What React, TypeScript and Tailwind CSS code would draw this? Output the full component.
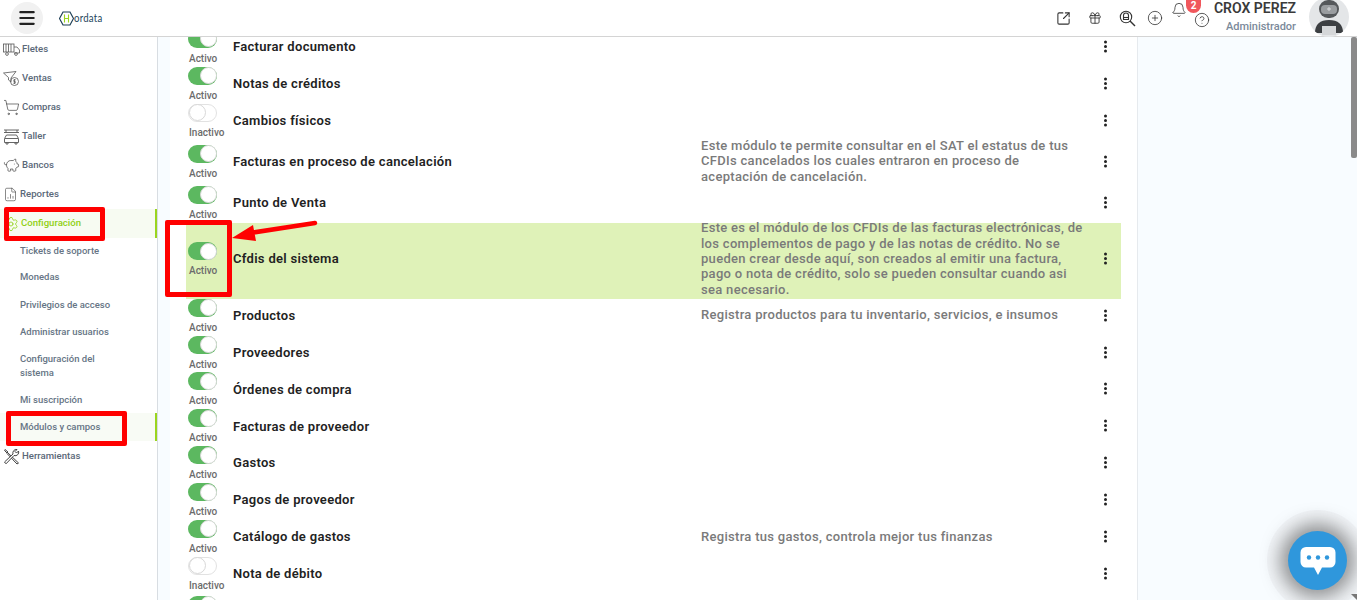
import { Menu, SquareArrowOutUpRight, Gift, CirclePlus, Bell, CircleHelp, ShoppingCart, PiggyBank, FileChartColumn, Settings } from 'lucide-react';

const FONT = "font-['Roboto',sans-serif]";

interface Row {
  title: string;
  active: boolean;
  desc?: string;
  hl?: boolean;
  h: string;
}

const ROWS: Row[] = [
  { title: 'Facturar documento', active: true, h: 'h-[36.9px]' },
  { title: 'Notas de créditos', active: true, h: 'h-[36.9px]' },
  { title: 'Cambios físicos', active: false, h: 'h-[36.9px]' },
  {
    title: 'Facturas en proceso de cancelación',
    active: true,
    h: 'h-[45px]',
    desc: 'Este módulo te permite consultar en el SAT el estatus de tus CFDIs cancelados los cuales entraron en proceso de aceptación de cancelación.',
  },
  { title: 'Punto de Venta', active: true, h: 'h-[37px]' },
  {
    title: 'Cfdis del sistema',
    active: true,
    hl: true,
    h: 'h-[76px]',
    desc: 'Este es el módulo de los CFDIs de las facturas electrónicas, de los complementos de pago y de las notas de crédito. No se pueden crear desde aquí, son creados al emitir una factura, pago o nota de crédito, solo se pueden consultar cuando asi sea necesario.',
  },
  { title: 'Productos', active: true, h: 'h-[36.9px]', desc: 'Registra productos para tu inventario, servicios, e insumos' },
  { title: 'Proveedores', active: true, h: 'h-[36.9px]' },
  { title: 'Órdenes de compra', active: true, h: 'h-[36.9px]' },
  { title: 'Facturas de proveedor', active: true, h: 'h-[36.9px]' },
  { title: 'Gastos', active: true, h: 'h-[36.9px]' },
  { title: 'Pagos de proveedor', active: true, h: 'h-[36.9px]' },
  { title: 'Catálogo de gastos', active: true, h: 'h-[36.9px]', desc: 'Registra tus gastos, controla mejor tus finanzas' },
  { title: 'Nota de débito', active: false, h: 'h-[36.9px]' },
];

function Switch({ on }: { on: boolean }) {
  return (
    <div className={`w-[29px] h-[18px] rounded-full flex items-center ${on ? 'bg-[#5cb860] justify-end' : 'bg-white border border-[#e2e2e2] justify-start'}`}>
      <div className="w-[17px] h-[17px] rounded-full bg-white border border-[#d8d8d8]" />
    </div>
  );
}

function Toggle({ on }: { on: boolean }) {
  return (
    <div className="flex flex-col items-start w-[33px] pl-[2px] pb-[1px]">
      <Switch on={on} />
      <div className="mt-[4px] pl-[1px] text-[10px] leading-[14px] font-medium text-[#6b6b6b] whitespace-nowrap">{on ? 'Activo' : 'Inactivo'}</div>
    </div>
  );
}

function Dots() {
  return (
    <svg width="15" height="15" viewBox="0 0 15 15" className="shrink-0 mb-[4px]">
      <circle cx="7.5" cy="3" r="1.5" fill="#222" />
      <circle cx="7.5" cy="7.5" r="1.5" fill="#222" />
      <circle cx="7.5" cy="12" r="1.5" fill="#222" />
    </svg>
  );
}

function TopItem({ icon, label, active }: { icon: React.ReactNode; label: string; active?: boolean }) {
  return (
    <div className={`h-[29px] flex items-center gap-[2px] pl-[3px] text-[9.6px] font-medium ${active ? 'bg-[#f7fbf2] text-[#8fd014] border-r-2 border-[#9ad51f]' : 'text-[#5a6878]'}`}>
      {icon}
      <span>{label}</span>
    </div>
  );
}

function SubItem({ label, h, active }: { label: string; h: string; active?: boolean }) {
  return (
    <div className={`${h} flex items-center pl-[20px] pr-[40px] text-[9.5px] leading-[14px] font-medium text-[#667585] ${active ? 'bg-[#f8fbf5] border-r-2 border-[#9ad51f]' : ''}`}>
      {label}
    </div>
  );
}

function FletesIcon() {
  return (
    <svg width="17" height="13" viewBox="0 0 17 13" fill="none" stroke="#555" strokeWidth="0.8">
      <rect x="0.5" y="1" width="10.5" height="8" />
      <path d="M3 1 V9 M5.5 1 V9 M8 1 V9" />
      <path d="M11 4 H14 L16.5 7 V10 H11" />
      <circle cx="4" cy="11" r="1.4" />
      <circle cx="13" cy="11" r="1.4" />
    </svg>
  );
}

function VentasIcon() {
  return (
    <svg width="17" height="17" viewBox="0 0 17 17" fill="none" stroke="#555" strokeWidth="0.8">
      <path d="M0.5 3 L13 1.5 L8 8 V12 L5.5 10 V7.5 Z" />
      <circle cx="11.5" cy="11.5" r="4" />
      <path d="M12.8 9.8 H10.8 V11.5 H12.3 V13.2 H10.2 M11.5 9 V14" strokeWidth="0.7" />
    </svg>
  );
}

function TallerIcon() {
  return (
    <svg width="17" height="17" viewBox="0 0 17 17" fill="none" stroke="#555" strokeWidth="0.9">
      <path d="M1 2 H16 M1 4.5 H16 M3 2 V4.5 M14 2 V4.5" />
      <path d="M3.5 7 H13.5 L15.5 10.5 V14.5 H1.5 V10.5 Z" />
      <path d="M2 10.5 H15" />
      <path d="M3 14.5 V16 H5 V14.5 M12 14.5 V16 H14 V14.5" />
    </svg>
  );
}

function ToolsIcon() {
  return (
    <svg width="17" height="17" viewBox="0 0 17 17" fill="none" stroke="#444" strokeWidth="1">
      <path d="M2 1.5 L5 4 L4 5 L1.5 2.5 Z M4.5 4.5 L15.5 15 L14 16 L3.8 5.3" />
      <path d="M15.5 3 L13.5 5 L12 3.5 L14 1.5 A3.5 3.5 0 0 0 10 6 L1.5 14 L3 15.8 L11 7.5 A3.5 3.5 0 0 0 15.5 3 Z" fill="#fff" />
    </svg>
  );
}

function SearchIcon() {
  return (
    <svg width="17" height="17" viewBox="0 0 17 17" fill="none" stroke="#333" strokeWidth="1.1" className="ml-[17px]">
      <circle cx="7" cy="7" r="5.7" />
      <path d="M11 11 L16 16" strokeWidth="1.4" />
      <path d="M4.5 9.5 V5.5 A2.5 2.5 0 0 1 9.5 5.5 V9.5 Z" />
      <path d="M4.5 7.5 H9.5" />
    </svg>
  );
}

function Logo() {
  return (
    <div className="flex items-center">
      <svg width="15" height="15" viewBox="0 0 15 15" fill="none">
        <path d="M4 1 H11 L14.5 7.5 L11 14 H4 L.5 7.5 Z" stroke="#1d3f55" strokeWidth="1.2" />
        <path d="M5.5 3.5 V11.5 M9.5 3.5 V11.5 M5.5 7.5 H9.5" stroke="#9ad51f" strokeWidth="1.1" />
      </svg>
      <span className="text-[12px] text-[#25465c] font-['Lato',sans-serif] tracking-[0.3px] scale-x-[0.8] origin-left">ordata</span>
    </div>
  );
}

function Avatar() {
  return (
    <div className="w-[40px] h-[40px] rounded-full bg-[#e4e6e8] overflow-hidden">
      <svg width="40" height="40" viewBox="0 0 40 40">
        <rect x="10" y="3" width="20" height="18" rx="9" fill="#55585b" />
        <rect x="12" y="8" width="16" height="9" rx="4" fill="#9a9da0" />
        <path d="M18 12 H22 M20 10 V14" stroke="#d8dadc" strokeWidth="1" />
        <path d="M6 36 C6 27 11 23 20 23 C29 23 34 27 34 36 Z" fill="#3c3f42" />
        <rect x="13" y="29" width="14" height="9" fill="#d5d7d9" />
      </svg>
    </div>
  );
}

export default function App() {
  return (
    <div className={`${FONT} relative w-[1357px] h-[600px] overflow-hidden bg-white flex flex-col`}>
      {/* Header */}
      <header className="h-[37px] shrink-0 border-b border-[#d4d4d4] flex items-center bg-white">
        <div className="ml-[11px] w-[32px] h-[32px] rounded-full bg-[#f1f1f1] flex items-center justify-center">
          <Menu size={20} strokeWidth={2.6} className="text-[#222]" />
        </div>
        <div className="ml-[16px]"><Logo /></div>
        <div className="ml-auto flex items-center text-[#333]">
          <SquareArrowOutUpRight size={15} strokeWidth={1.7} />
          <Gift size={14} strokeWidth={1.5} className="ml-[17px]" />
          <SearchIcon />
          <CirclePlus size={16} strokeWidth={1.2} className="ml-[11px]" />
          <div className="relative w-[43px] h-[32px] ml-[7px]">
            <Bell size={16} strokeWidth={1.2} className="absolute left-[1px] top-0" />
            <span className="absolute left-[16px] -top-[2px] w-[15px] h-[13px] rounded-b-full rounded-t-[3px] bg-[#f0575c] text-white text-[10px] leading-[12px] font-bold text-center">2</span>
            <CircleHelp size={16} strokeWidth={1.2} className="absolute left-[24px] top-[10px]" />
          </div>
          <div className="ml-[2px] w-[81px] flex flex-col items-end">
            <div className="text-[14px] leading-[16px] font-semibold text-[#3a3a3a] whitespace-nowrap -mt-[2px]">CROX PEREZ</div>
            <div className="text-[11px] leading-[14px] font-medium text-[#7b8a9a] mt-[4px]">Administrador</div>
          </div>
          <div className="ml-[13px] mr-[8px] -mt-[2px]"><Avatar /></div>
        </div>
      </header>

      <div className="flex flex-1 min-h-0">
        {/* Sidebar */}
        <aside className="w-[158px] shrink-0 border-r border-[#d8dde2] bg-white overflow-hidden">
          <nav className="-mt-[2px]">
            <TopItem icon={<FletesIcon />} label="Fletes" />
            <TopItem icon={<VentasIcon />} label="Ventas" />
            <TopItem icon={<ShoppingCart size={17} strokeWidth={1} className="text-[#444]" />} label="Compras" />
            <TopItem icon={<TallerIcon />} label="Taller" />
            <TopItem icon={<PiggyBank size={17} strokeWidth={1} className="text-[#444]" />} label="Bancos" />
            <TopItem icon={<FileChartColumn size={15} strokeWidth={1} className="text-[#444]" />} label="Reportes" />
            <TopItem icon={<Settings size={16} strokeWidth={1.2} className="text-[#8fd014]" />} label="Configuración" active />
            <SubItem label="Tickets de soporte" h="h-[25px]" />
            <SubItem label="Monedas" h="h-[28px]" />
            <SubItem label="Privilegios de acceso" h="h-[27px]" />
            <SubItem label="Administrar usuarios" h="h-[27px]" />
            <SubItem label="Configuración del sistema" h="h-[42px]" />
            <SubItem label="Mi suscripción" h="h-[26px]" />
            <SubItem label="Módulos y campos" h="h-[28px]" active />
            <div className="mt-[1px]"><TopItem icon={<ToolsIcon />} label="Herramientas" /></div>
          </nav>
        </aside>

        {/* Main */}
        <main className="flex-1 min-w-0 bg-[#f8fcff] flex pl-[12px]">
          <div className="w-[967px] h-full bg-white overflow-hidden pl-[16px] pr-[16px]">
            <div className="-mt-[7px]">
              {ROWS.map((r, i) => (
                <div key={i} className={`${r.h} flex items-center ${r.hl ? 'bg-[#dff2b8]' : ''}`}>
                  <div className="w-[47px] shrink-0 flex"><Toggle on={r.active} /></div>
                  <div className="w-[468px] shrink-0 text-[13px] font-semibold text-[#222] tracking-[0.3px] pb-[3px] whitespace-nowrap">{r.title}</div>
                  <div className="w-[397px] pr-[11px] shrink-0 text-[13px] leading-[15.4px] font-medium text-[#7a7a7a] tracking-[0.3px] pb-[4px]">{r.desc}</div>
                  <Dots />
                </div>
              ))}
              {/* next row, only its switch is still in view */}
              <div className="pl-[2px] pt-[2px]"><Switch on /></div>
            </div>
          </div>
          <div className="flex-1 border-l border-[#e6eaee] relative">
            <div className="absolute right-0 top-0 w-[6px] h-[121px] bg-[#8a8a8a] rounded-[2px]" />
          </div>
        </main>
      </div>

      {/* Annotations */}
      <div className="absolute left-[4px] top-[207px] w-[101px] h-[34px] border-[5px] border-[#f00] rounded-[2px]" />
      <div className="absolute left-[6px] top-[411px] w-[121px] h-[35px] border-[5px] border-[#f00] rounded-[2px]" />
      <div className="absolute left-[165px] top-[220px] w-[67px] h-[77px] border-[5px] border-[#f00] rounded-[2px]" />
      <svg className="absolute left-[230px] top-[218px]" width="92" height="28" viewBox="0 0 92 28">
        <path d="M85 5 L20 15" stroke="#f00" strokeWidth="4.5" strokeLinecap="round" />
        <path d="M2 20 L23 7 L26 23 Z" fill="#f00" />
      </svg>

      {/* Chat */}
      <div className="absolute left-[1288px] top-[531px] w-[59px] h-[59px] rounded-full bg-[#2f97dc] shadow-[0_0_18px_8px_rgba(50,50,50,0.5),0_0_0_21px_rgba(235,238,241,0.5)] flex items-center justify-center">
        <svg width="36" height="30" viewBox="0 0 36 30">
          <path d="M6 1 H30 A5.5 5.5 0 0 1 35.5 6.5 V16 A5.5 5.5 0 0 1 30 21.5 H22 L18 29 L14 21.5 H6 A5.5 5.5 0 0 1 .5 16 V6.5 A5.5 5.5 0 0 1 6 1 Z" fill="#fff" />
          <circle cx="9" cy="11.5" r="2.2" fill="#2f97dc" />
          <circle cx="18" cy="11.5" r="2.2" fill="#2f97dc" />
          <circle cx="27" cy="11.5" r="2.2" fill="#2f97dc" />
        </svg>
      </div>
      <div className="absolute right-0 bottom-0 w-0 h-0 border-l-[6px] border-l-transparent border-t-[6px] border-t-[#777]" />
    </div>
  );
}
